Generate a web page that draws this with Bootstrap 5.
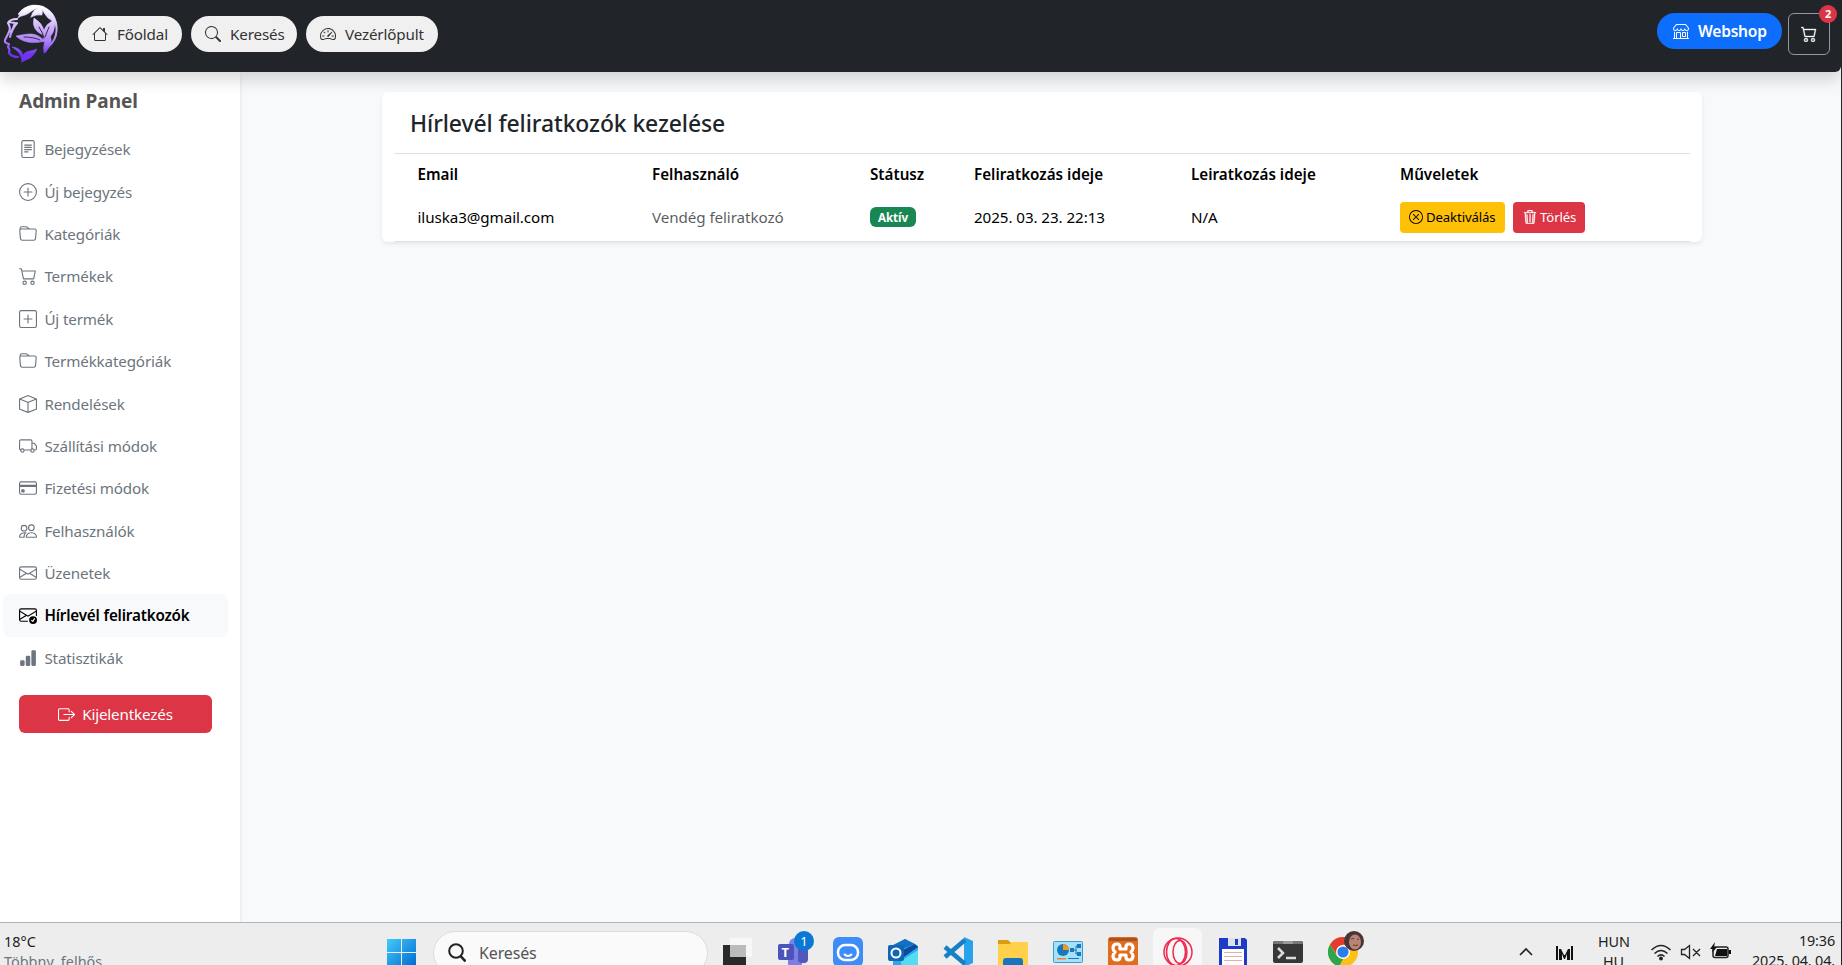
<!DOCTYPE html>
<html lang="hu">
<head>
<meta charset="utf-8">
<meta name="viewport" content="width=device-width, initial-scale=1">
<title>Hírlevél feliratkozók kezelése</title>
<link href="https://cdn.jsdelivr.net/npm/bootstrap@5.3.0/dist/css/bootstrap.min.css" rel="stylesheet">
<style>
body{font-family:"Noto Sans","Open Sans",sans-serif;font-size:15.2px;letter-spacing:-.15px;line-height:24px;height:965px;overflow:hidden;background:#f8f9fa;border-right:1px solid #212529}
svg{flex:none;display:block}
.i{fill:currentColor}
.topbar{height:72px;background:#212529;border-bottom-right-radius:6px;box-shadow:0 8px 16px rgba(0,0,0,.15);z-index:3;padding:0 11px 0 3px}
.main-nav{gap:9px;margin-left:3px}
.pill{height:36px;border-radius:18px;background:#f0f0f0;color:#333;padding:0 0 0 14px;gap:9px;white-space:nowrap}
.pill-a{width:104px}.pill-b{width:106px}.pill-c{width:132px}
.shop-area{gap:6px;margin-top:13px}
.shop-pill{width:125px;height:36px;border-radius:18px;font-weight:600;font-size:15.6px;padding-left:16px;gap:9px;white-space:nowrap;letter-spacing:-.25px}
.cart-btn{width:42px;height:42px;border:1px solid #959799;border-radius:6px;color:#f8f9fa}
.cart-btn svg{stroke:currentColor;stroke-width:.35}
.cart-num{position:absolute;right:-8px;top:-9px;width:18px;height:18px;font-size:11px;line-height:18px;font-weight:700}
.side{width:240px;background:#fff;box-shadow:0 2px 4px rgba(0,0,0,.1);padding:0 12px 0 3px}
.side-title{font-size:19px;font-weight:700;color:#555;line-height:24px;margin:17px 0 15px 16px;letter-spacing:-.02px}
.side-link{height:42.4px;padding:0 16px;gap:7.4px;border-radius:8px;color:#6c757d;white-space:nowrap}
.side-link.on{background:#f8f9fa;color:#000;font-weight:600;letter-spacing:-.18px}
.logout{height:38px;margin:16px 16px 0;border-radius:6px;gap:7px}
.panel{width:1320px;height:150px;margin:20px 0 0 142px;border-radius:6px;background:#fff;box-shadow:0 2px 4px rgba(0,0,0,.075);padding:0 12px}
.panel h1{font-size:22.9px;line-height:29px;padding:17px 16px 15px;margin:0;font-weight:500;letter-spacing:-.08px;color:#212529}
.subs{border-top:1px solid #dee2e6;table-layout:fixed;color:#000;letter-spacing:-.08px}
.subs th,.subs td{border:0;padding:7px 0 8px;white-space:nowrap}
.subs th{font-weight:600;height:41px;letter-spacing:.02px}
.subs th:first-child,.subs td:first-child{padding-left:23.5px}
.subs tr:last-child td{border-bottom:1px solid #dee2e6}
.act{height:31px;border-radius:4px;font-size:13.2px;gap:3px;letter-spacing:-.12px}
.act-w{width:105px;padding-left:9px}.act-d{width:72px;padding-left:10px}
.act-d svg{stroke:currentColor;stroke-width:.4}
.state{width:46px;height:20px;font-size:11.6px;line-height:21px;padding:0;border-radius:6px}
.taskbar{height:43px;background:#ededed;border-top:1px solid #b3b3b3;z-index:4;color:#222;font-size:14.4px;line-height:20px}
.weather{width:387px;padding:9px 0 0 4px;letter-spacing:.02px}
.find{width:275px;height:44px;margin:8px 2px 0 17px;border-radius:22px;background:#fafafa;border:1px solid #dcdcdc;padding-left:14px;gap:13px;color:#555;font-size:16px}
.app{width:55px;height:49px;margin-top:5px;padding-top:9px}
.app.on .tile{background:#f7f7f7;border-radius:6px;width:49px;height:49px;margin-top:-9px;padding-top:9px}
.dot{position:absolute;left:29px;top:3px;width:20px;height:20px;border-radius:50%;background:#0a78d4;color:#fff;font-size:13px}
.lang{width:31px;padding-top:9px}
.clock{width:83px;margin-right:6px;padding-top:8px}
</style>
</head>
<body>
<svg width="0" height="0" class="position-absolute" viewBox="0 0 16 16">
<defs>
<linearGradient id="lg" x1="0" y1="0" x2="0" y2="60" gradientUnits="userSpaceOnUse"><stop offset=".12" stop-color="#fff"/><stop offset=".5" stop-color="#c8a8fa"/><stop offset=".72" stop-color="#a678f6"/><stop offset=".9" stop-color="#6f33f5"/></linearGradient>
<linearGradient id="win" x1="0" y1="0" x2="1" y2="1"><stop offset="0" stop-color="#45cdfb"/><stop offset="1" stop-color="#0068cf"/></linearGradient>
</defs>
<symbol id="house" viewBox="0 0 16 16"><path d="M8.707 1.500a1 1 0 0 0-1.414 0L.646 8.146a.5.5 0 0 0 .708.708L2 8.207V13.500A1.500 1.500 0 0 0 3.500 15h9a1.500 1.500 0 0 0 1.500-1.500V8.207l.646.647a.5.5 0 0 0 .708-.708L13 5.793V2.500a.5.5 0 0 0-.5-.5h-1a.5.5 0 0 0-.5.5v1.293L8.707 1.500ZM13 7.207V13.500a.5.5 0 0 1-.5.5h-9a.5.5 0 0 1-.5-.5V7.207l5-5 5 5Z"/></symbol>
<symbol id="search" viewBox="0 0 16 16"><path d="M11.742 10.344a6.500 6.500 0 1 0-1.397 1.398h-.001c.03.04.062.078.098.115l3.850 3.850a1 1 0 0 0 1.415-1.414l-3.850-3.850a1.007 1.007 0 0 0-.115-.1zM12 6.500a5.500 5.500 0 1 1-11 0 5.500 5.500 0 0 1 11 0z"/></symbol>
<symbol id="speed" viewBox="0 0 16 16"><path d="M8 4a.5.5 0 0 1 .5.5V6a.5.5 0 0 1-1 0V4.500A.5.5 0 0 1 8 4zM3.732 5.732a.5.5 0 0 1 .707 0l.915.914a.5.5 0 1 1-.708.708l-.914-.915a.5.5 0 0 1 0-.707zM2 10a.5.5 0 0 1 .5-.5h1.586a.5.5 0 0 1 0 1H2.500A.5.5 0 0 1 2 10zm9.500 0a.5.5 0 0 1 .5-.5h1.500a.5.5 0 0 1 0 1H12a.5.5 0 0 1-.5-.5zm.754-4.246a.389.389 0 0 0-.527-.02L7.547 9.310a.910.910 0 1 0 1.302 1.258l3.434-4.297a.389.389 0 0 0-.029-.518z"/><path fill-rule="evenodd" d="M0 10a8 8 0 1 1 15.547 2.661c-.442 1.253-1.845 1.602-2.932 1.250C11.309 13.488 9.475 13 8 13c-1.474 0-3.310.488-4.615.911-1.087.352-2.490.003-2.932-1.250A7.988 7.988 0 0 1 0 10zm8-7a7 7 0 0 0-6.603 9.329c.203.575.923.876 1.680.630C4.397 12.533 6.358 12 8 12s3.604.532 4.923.960c.757.245 1.477-.056 1.680-.631A7 7 0 0 0 8 3z"/></symbol>
<symbol id="shop" viewBox="0 0 16 16"><path d="M2.970 1.350A1 1 0 0 1 3.730 1h8.540a1 1 0 0 1 .760.350l2.609 3.044A1.500 1.500 0 0 1 16 5.370v.255a2.375 2.375 0 0 1-4.250 1.458A2.371 2.371 0 0 1 9.875 8 2.370 2.370 0 0 1 8 7.083 2.370 2.370 0 0 1 6.125 8a2.370 2.370 0 0 1-1.875-.917A2.375 2.375 0 0 1 0 5.625V5.370a1.500 1.500 0 0 1 .361-.976l2.610-3.045zm1.780 4.275a1.375 1.375 0 0 0 2.750 0 .5.5 0 0 1 1 0 1.375 1.375 0 0 0 2.750 0 .5.5 0 0 1 1 0 1.375 1.375 0 1 0 2.750 0V5.370a.5.5 0 0 0-.120-.325L12.270 2H3.730L1.120 5.045A.5.5 0 0 0 1 5.370v.255a1.375 1.375 0 0 0 2.750 0 .5.5 0 0 1 1 0zM1.500 8.500A.5.5 0 0 1 2 9v6h1v-5a1 1 0 0 1 1-1h3a1 1 0 0 1 1 1v5h6V9a.5.5 0 0 1 1 0v6h.5a.5.5 0 0 1 0 1H.5a.5.5 0 0 1 0-1H1V9a.5.5 0 0 1 .5-.5zM4 15h3v-5H4v5zm5-5a1 1 0 0 1 1-1h2a1 1 0 0 1 1 1v3a1 1 0 0 1-1 1h-2a1 1 0 0 1-1-1v-3zm3 0h-2v3h2v-3z"/></symbol>
<symbol id="cart" viewBox="0 0 16 16"><path d="M0 1.500A.5.5 0 0 1 .5 1H2a.5.5 0 0 1 .485.379L2.890 3H14.500a.5.5 0 0 1 .490.598l-1.500 7A.5.5 0 0 1 13 11H4a.5.5 0 0 1-.491-.408L2.010 3.607 1.610 2H.5a.5.5 0 0 1-.5-.5zM3.102 4l1.313 6h8.170l1.313-6H3.102zM5 12a2 2 0 1 0 0 4 2 2 0 0 0 0-4zm7 0a2 2 0 1 0 0 4 2 2 0 0 0 0-4zm-7 1a1 1 0 1 1 0 2 1 1 0 0 1 0-2zm7 0a1 1 0 1 1 0 2 1 1 0 0 1 0-2z"/></symbol>
<symbol id="file" viewBox="0 0 16 16"><path d="M5 4a.5.5 0 0 0 0 1h6a.5.5 0 0 0 0-1H5zm-.5 2.500A.5.5 0 0 1 5 6h6a.5.5 0 0 1 0 1H5a.5.5 0 0 1-.5-.5zM5 8a.5.5 0 0 0 0 1h6a.5.5 0 0 0 0-1H5zm0 2a.5.5 0 0 0 0 1h3a.5.5 0 0 0 0-1H5z"/><path d="M2 2a2 2 0 0 1 2-2h8a2 2 0 0 1 2 2v12a2 2 0 0 1-2 2H4a2 2 0 0 1-2-2V2zm10-1H4a1 1 0 0 0-1 1v12a1 1 0 0 0 1 1h8a1 1 0 0 0 1-1V2a1 1 0 0 0-1-1z"/></symbol>
<symbol id="plusc" viewBox="0 0 16 16"><path d="M8 15A7 7 0 1 1 8 1a7 7 0 0 1 0 14zm0 1A8 8 0 1 0 8 0a8 8 0 0 0 0 16z"/><path d="M8 4a.5.5 0 0 1 .5.5v3h3a.5.5 0 0 1 0 1h-3v3a.5.5 0 0 1-1 0v-3h-3a.5.5 0 0 1 0-1h3v-3A.5.5 0 0 1 8 4z"/></symbol>
<symbol id="pluss" viewBox="0 0 16 16"><path d="M14 1a1 1 0 0 1 1 1v12a1 1 0 0 1-1 1H2a1 1 0 0 1-1-1V2a1 1 0 0 1 1-1h12zM2 0a2 2 0 0 0-2 2v12a2 2 0 0 0 2 2h12a2 2 0 0 0 2-2V2a2 2 0 0 0-2-2H2z"/><path d="M8 4a.5.5 0 0 1 .5.5v3h3a.5.5 0 0 1 0 1h-3v3a.5.5 0 0 1-1 0v-3h-3a.5.5 0 0 1 0-1h3v-3A.5.5 0 0 1 8 4z"/></symbol>
<symbol id="folder" viewBox="0 0 16 16"><path d="M.540 3.870.5 3a2 2 0 0 1 2-2h3.672a2 2 0 0 1 1.414.586l.828.828A2 2 0 0 0 9.828 3h3.982a2 2 0 0 1 1.992 2.181l-.637 7A2 2 0 0 1 13.174 14H2.826a2 2 0 0 1-1.991-1.819l-.637-7a1.990 1.990 0 0 1 .342-1.310zM2.190 4a1 1 0 0 0-.996 1.090l.637 7a1 1 0 0 0 .995.910h10.348a1 1 0 0 0 .995-.910l.637-7A1 1 0 0 0 13.810 4H2.190zm4.690-1.707A1 1 0 0 0 6.172 2H2.500a1 1 0 0 0-1 .981l.006.139C1.720 3.042 1.950 3 2.190 3h5.396l-.707-.707z"/></symbol>
<symbol id="box" viewBox="0 0 16 16"><path d="M8.186 1.113a.5.5 0 0 0-.372 0L1.846 3.500 8 5.961 14.154 3.500 8.186 1.113zM15 4.239l-6.500 2.600v7.922l6.500-2.600V4.240zM7.500 14.762V6.838L1 4.239v7.923l6.500 2.600zM7.443.184a1.500 1.500 0 0 1 1.114 0l7.129 2.852A.5.5 0 0 1 16 3.500v8.662a1 1 0 0 1-.629.928l-7.185 2.874a.5.5 0 0 1-.372 0L.630 13.090a1 1 0 0 1-.630-.928V3.500a.5.5 0 0 1 .314-.464L7.443.184z"/></symbol>
<symbol id="truck" viewBox="0 0 16 16"><path d="M0 3.500A1.500 1.500 0 0 1 1.500 2h9A1.500 1.500 0 0 1 12 3.500V5h1.020a1.500 1.500 0 0 1 1.170.563l1.481 1.850a1.500 1.500 0 0 1 .329.938V10.500a1.500 1.500 0 0 1-1.500 1.500H14a2 2 0 1 1-4 0H5a2 2 0 1 1-3.998-.085A1.500 1.500 0 0 1 0 10.500v-7zm1.294 7.456A1.999 1.999 0 0 1 4.732 11h5.536a2.010 2.010 0 0 1 .732-.732V3.500a.5.5 0 0 0-.5-.5h-9a.5.5 0 0 0-.5.5v7a.5.5 0 0 0 .294.456zM12 10a2 2 0 0 1 1.732 1h.768a.5.5 0 0 0 .5-.5V8.350a.5.5 0 0 0-.110-.312l-1.480-1.850A.5.5 0 0 0 13.020 6H12v4zm-9 1a1 1 0 1 0 0 2 1 1 0 0 0 0-2zm9 0a1 1 0 1 0 0 2 1 1 0 0 0 0-2z"/></symbol>
<symbol id="card" viewBox="0 0 16 16"><path d="M0 4a2 2 0 0 1 2-2h12a2 2 0 0 1 2 2v8a2 2 0 0 1-2 2H2a2 2 0 0 1-2-2V4zm2-1a1 1 0 0 0-1 1v1h14V4a1 1 0 0 0-1-1H2zm13 4H1v5a1 1 0 0 0 1 1h12a1 1 0 0 0 1-1V7z"/><path d="M2 10a1 1 0 0 1 1-1h1a1 1 0 0 1 1 1v1a1 1 0 0 1-1 1H3a1 1 0 0 1-1-1v-1z"/></symbol>
<symbol id="people" viewBox="0 0 16 16"><path d="M15 14s1 0 1-1-1-4-5-4-5 3-5 4 1 1 1 1h8Zm-7.978-1A.261.261 0 0 1 7 12.996c.001-.264.167-1.030.760-1.720C8.312 10.629 9.282 10 11 10c1.717 0 2.687.630 3.240 1.276.593.690.758 1.457.760 1.720l-.008.002a.274.274 0 0 1-.014.002H7.022ZM11 7a2 2 0 1 0 0-4 2 2 0 0 0 0 4Zm3-2a3 3 0 1 1-6 0 3 3 0 0 1 6 0ZM6.936 9.280a5.880 5.880 0 0 0-1.230-.247A7.350 7.350 0 0 0 5 9c-4 0-5 3-5 4 0 .667.333 1 1 1h4.216A2.238 2.238 0 0 1 5 13c0-1.010.377-2.042 1.090-2.904.243-.294.526-.569.846-.816ZM4.920 10A5.493 5.493 0 0 0 4 13H1c0-.260.164-1.030.760-1.724.545-.636 1.492-1.256 3.160-1.275ZM1.500 5.500a3 3 0 1 1 6 0 3 3 0 0 1-6 0Zm3-2a2 2 0 1 0 0 4 2 2 0 0 0 0-4Z"/></symbol>
<symbol id="mail" viewBox="0 0 16 16"><path d="M0 4a2 2 0 0 1 2-2h12a2 2 0 0 1 2 2v8a2 2 0 0 1-2 2H2a2 2 0 0 1-2-2V4Zm2-1a1 1 0 0 0-1 1v.217l7 4.200 7-4.200V4a1 1 0 0 0-1-1H2Zm13 2.383-4.708 2.825L15 11.105V5.383Zm-.034 6.876-5.640-3.471L8 9.583l-1.326-.795-5.640 3.470A1 1 0 0 0 2 13h12a1 1 0 0 0 .966-.741ZM1 11.105l4.708-2.897L1 5.383v5.722Z"/></symbol>
<symbol id="mailok" viewBox="0 0 16 16"><path d="M2 2a2 2 0 0 0-2 2v8.010A2 2 0 0 0 2 14h5.500a.5.5 0 0 0 0-1H2a1 1 0 0 1-.966-.741l5.640-3.471L8 9.583l7-4.200V8.500a.5.5 0 0 0 1 0V4a2 2 0 0 0-2-2H2Zm3.708 6.208L1 11.105V5.383l4.708 2.825ZM1 4.217V4a1 1 0 0 1 1-1h12a1 1 0 0 1 1 1v.217l-7 4.200-7-4.200Z"/><path d="M16 12.500a3.500 3.500 0 1 1-7 0 3.500 3.500 0 0 1 7 0Zm-1.993-1.679a.5.5 0 0 0-.686.172l-1.170 1.950-.547-.547a.5.5 0 0 0-.708.708l.774.773a.750.750 0 0 0 1.174-.144l1.335-2.226a.5.5 0 0 0-.172-.686Z"/></symbol>
<symbol id="bars" viewBox="0 0 16 16"><path d="M1 11a1 1 0 0 1 1-1h2a1 1 0 0 1 1 1v3a1 1 0 0 1-1 1H2a1 1 0 0 1-1-1v-3zm5-4a1 1 0 0 1 1-1h2a1 1 0 0 1 1 1v7a1 1 0 0 1-1 1H7a1 1 0 0 1-1-1V7zm5-5a1 1 0 0 1 1-1h2a1 1 0 0 1 1 1v12a1 1 0 0 1-1 1h-2a1 1 0 0 1-1-1V2z"/></symbol>
<symbol id="out" viewBox="0 0 16 16"><path d="M10 12.500a.5.5 0 0 1-.5.5h-8a.5.5 0 0 1-.5-.5v-9a.5.5 0 0 1 .5-.5h8a.5.5 0 0 1 .5.5v2a.5.5 0 0 0 1 0v-2A1.500 1.500 0 0 0 9.500 2h-8A1.500 1.500 0 0 0 0 3.500v9A1.500 1.500 0 0 0 1.500 14h8a1.500 1.500 0 0 0 1.500-1.500v-2a.5.5 0 0 0-1 0v2z"/><path d="M15.854 8.354a.5.5 0 0 0 0-.708l-3-3a.5.5 0 0 0-.708.708L14.293 7.500H5.500a.5.5 0 0 0 0 1h8.793l-2.147 2.146a.5.5 0 0 0 .708.708l3-3z"/></symbol>
<symbol id="xc" viewBox="0 0 16 16"><path d="M8 15A7 7 0 1 1 8 1a7 7 0 0 1 0 14zm0 1A8 8 0 1 0 8 0a8 8 0 0 0 0 16z"/><path d="M4.646 4.646a.5.5 0 0 1 .708 0L8 7.293l2.646-2.647a.5.5 0 0 1 .708.708L8.707 8l2.647 2.646a.5.5 0 0 1-.708.708L8 8.707l-2.646 2.647a.5.5 0 0 1-.708-.708L7.293 8 4.646 5.354a.5.5 0 0 1 0-.708z"/></symbol>
<symbol id="trash" viewBox="0 0 16 16"><path d="M6.500 1h3a.5.5 0 0 1 .5.5v1H6v-1a.5.5 0 0 1 .5-.5ZM11 2.500v-1A1.500 1.500 0 0 0 9.500 0h-3A1.500 1.500 0 0 0 5 1.500v1H2.506a.580.580 0 0 0-.010 0H1.500a.5.5 0 0 0 0 1h.538l.853 10.660A2 2 0 0 0 4.885 16h6.230a2 2 0 0 0 1.994-1.840l.853-10.660h.538a.5.5 0 0 0 0-1h-.995a.590.590 0 0 0-.010 0H11Zm1.958 1-.846 10.580a1 1 0 0 1-.997.920h-6.230a1 1 0 0 1-.997-.920L3.042 3.500h9.916ZM4.500 5a.5.5 0 0 1 .530.470l.5 8.500a.5.5 0 0 1-.998.060L4.030 5.530A.5.5 0 0 1 4.500 5Zm7 0a.5.5 0 0 1 .470.530l-.5 8.500a.5.5 0 0 1-.998-.060l.5-8.500A.5.5 0 0 1 11.500 5ZM8 4.500a.5.5 0 0 1 .5.5v8.500a.5.5 0 0 1-1 0V5a.5.5 0 0 1 .5-.5Z"/></symbol>
</svg>

<div class="d-flex flex-column h-100">
<header class="topbar d-flex align-items-start position-relative flex-shrink-0">
  <svg width="56" height="64" viewBox="3 0 56 64" class="me-3" fill="none" stroke="url(#lg)" stroke-linecap="round" stroke-linejoin="round">
    <path d="M19 14C25 5 40 3 49 11c9 8 10 23 3 32q-5 5-7 9" stroke-width="2"/>
    <g fill="url(#lg)" stroke-width=".6"><path d="M18 18C23 5 33 3 42 7 33 8 31 13 25 15Q20 16 18 18Z"/><path d="M31 17Q33 8 43 6L42 15Q37 14 31 17Z"/><path d="M42 7Q56 12 56 27 54 21 48 18 43 13 42 7Z"/><path d="M43 35Q31 30 34 18 42 23 44 30 46 24 54 20 57 34 44 42Z"/><path d="M45 41C35 31 28 34 16 36 23 43 34 44 45 41Z"/><path d="M22 62C22 55 17 50 12 47 21 48 22 53 23 55 27 50 30 52 37 49 32 60 26 59 22 62Z"/><path d="M44 53Q42 43 49 34 54 42 48 47Z"/></g>
    <path d="M17 19q-7 0-9 4 3 5 1 9l-4 8q-1 3 4 4l-1 3q2 2 1 6 3 4 9 4M9 22l6 1q-2 6-4 9M10 37q2-8 7-14" stroke-width="2.100"/>
    <path d="M39 27q4 6 5 11M49 27q-2 5-4 10M24 37q10 0 16 3" stroke="#212529" stroke-width=".9"/>
  </svg>
  <nav class="main-nav d-flex pt-3">
    <a class="pill pill-a d-flex align-items-center text-decoration-none" href="#"><svg class="i" width="16" height="16"><use href="#house"/></svg>Főoldal</a>
    <a class="pill pill-b d-flex align-items-center text-decoration-none" href="#"><svg class="i" width="16" height="16"><use href="#search"/></svg>Keresés</a>
    <a class="pill pill-c d-flex align-items-center text-decoration-none" href="#"><svg class="i" width="16" height="16"><use href="#speed"/></svg>Vezérlőpult</a>
  </nav>
  <div class="shop-area d-flex ms-auto align-items-start">
    <a class="shop-pill d-flex align-items-center text-bg-primary text-decoration-none" href="#"><svg class="i" width="16" height="16"><use href="#shop"/></svg>Webshop</a>
    <a class="cart-btn d-flex align-items-center justify-content-center position-relative" href="#"><svg class="i" width="16" height="16"><use href="#cart"/></svg><span class="cart-num rounded-circle text-bg-danger text-center">2</span></a>
  </div>
</header>

<div class="d-flex flex-grow-1 overflow-hidden">
  <aside class="side flex-shrink-0">
    <div class="side-title">Admin Panel</div>
    <nav>
      <div class="side-link d-flex align-items-center"><svg class="i" width="18" height="18"><use href="#file"/></svg>Bejegyzések</div>
      <div class="side-link d-flex align-items-center"><svg class="i" width="18" height="18"><use href="#plusc"/></svg>Új bejegyzés</div>
      <div class="side-link d-flex align-items-center"><svg class="i" width="18" height="18"><use href="#folder"/></svg>Kategóriák</div>
      <div class="side-link d-flex align-items-center"><svg class="i" width="18" height="18"><use href="#cart"/></svg>Termékek</div>
      <div class="side-link d-flex align-items-center"><svg class="i" width="18" height="18"><use href="#pluss"/></svg>Új termék</div>
      <div class="side-link d-flex align-items-center"><svg class="i" width="18" height="18"><use href="#folder"/></svg>Termékkategóriák</div>
      <div class="side-link d-flex align-items-center"><svg class="i" width="18" height="18"><use href="#box"/></svg>Rendelések</div>
      <div class="side-link d-flex align-items-center"><svg class="i" width="18" height="18"><use href="#truck"/></svg>Szállítási módok</div>
      <div class="side-link d-flex align-items-center"><svg class="i" width="18" height="18"><use href="#card"/></svg>Fizetési módok</div>
      <div class="side-link d-flex align-items-center"><svg class="i" width="18" height="18"><use href="#people"/></svg>Felhasználók</div>
      <div class="side-link d-flex align-items-center"><svg class="i" width="18" height="18"><use href="#mail"/></svg>Üzenetek</div>
      <div class="side-link on d-flex align-items-center"><svg class="i" width="18" height="18"><use href="#mailok"/></svg>Hírlevél feliratkozók</div>
      <div class="side-link d-flex align-items-center"><svg class="i" width="18" height="18"><use href="#bars"/></svg>Statisztikák</div>
    </nav>
    <div class="logout d-flex align-items-center justify-content-center text-bg-danger"><svg class="i" width="17" height="17"><use href="#out"/></svg>Kijelentkezés</div>
  </aside>
  <main class="flex-grow-1">
    <section class="panel">
      <h1>Hírlevél feliratkozók kezelése</h1>
      <table class="subs w-100">
        <colgroup><col width="258"><col width="218"><col width="104"><col width="217"><col width="209"><col></colgroup>
        <tr><th>Email</th><th>Felhasználó</th><th>Státusz</th><th>Feliratkozás ideje</th><th>Leiratkozás ideje</th><th>Műveletek</th></tr>
        <tr><td>iluska3@gmail.com</td><td class="text-muted">Vendég feliratkozó</td><td><span class="badge state text-bg-success d-block">Aktív</span></td><td>2025. 03. 23. 22:13</td><td>N/A</td>
        <td><div class="d-flex gap-2"><span class="act act-w d-flex align-items-center text-bg-warning"><svg class="i" width="14" height="14"><use href="#xc"/></svg>Deaktiválás</span><span class="act act-d d-flex align-items-center text-bg-danger"><svg class="i" width="14" height="14"><use href="#trash"/></svg>Törlés</span></div></td></tr>
      </table>
    </section>
  </main>
</div>

<footer class="taskbar d-flex align-items-start flex-shrink-0 position-relative overflow-hidden">
  <div class="weather text-nowrap flex-shrink-0">18°C<br><span class="text-secondary">Többny. felhős</span></div>
  <svg width="29" height="29" class="mt-3" viewBox="0 1 29 29" fill="url(#win)"><path d="M1 0h13v14H0V1zM15 0h13l1 1v13H15zM0 15h14v14H0zM15 15h14v14H15z"/></svg>
  <div class="find d-flex align-items-center flex-shrink-0"><svg width="18" height="20" viewBox="0 0 18 20" fill="none" stroke="#222" stroke-width="2"><circle cx="8" cy="8" r="6.800"/><path d="m12.500 13 5 5.500" stroke-width="2.600"/></svg>Keresés</div>
  <div class="app d-flex justify-content-center"><svg width="30" height="30"><path fill="#292929" d="M0 8h23v22H0z"/><path fill="#f7f7f7" d="M7 1h22v19H7z"/><path fill="#bbb" d="M7 8h16v12H7z"/></svg></div>
  <div class="app d-flex justify-content-center position-relative"><svg width="30" height="30"><circle cx="17" cy="7" r="6" fill="#7b83eb"/><rect x="10" y="10" width="14" height="20" rx="4" fill="#7b7ee3"/><rect x="20" y="10" width="10" height="16" rx="4" fill="#5158bb"/><rect y="7" width="16" height="16" rx="2" fill="#4b53bc"/><text x="3.500" y="20" font-size="13" font-weight="700" fill="#fff">T</text></svg><span class="dot text-center">1</span></div>
  <div class="app d-flex justify-content-center"><svg width="30" height="30" fill="none"><rect width="30" height="30" rx="6" fill="#3d8df8"/><rect x="5" y="8" width="20" height="15" rx="7" stroke="#fff" stroke-width="2.500"/><path d="M11 17q4 4 8 0" stroke="#fff" stroke-width="2"/></svg></div>
  <div class="app d-flex justify-content-center"><svg width="30" height="30"><path fill="#2ba7ee" d="M17 2 5 9v21h25V9z"/><path fill="#1271c4" d="M17 2 5 8l4 6 18-7z"/><path fill="#0d4a9b" d="m27 7 3 3-17 12V14z"/><path fill="#55dcf3" d="m30 13-17 11v6h17z"/><rect y="8" width="16" height="16" rx="2" fill="#1066b5"/><circle cx="8" cy="16" r="4.500" fill="none" stroke="#fff" stroke-width="2"/></svg></div>
  <div class="app d-flex justify-content-center"><svg width="30" height="30"><path fill="#28a3eb" d="m21 0 9 4v22l-9 4z"/><path fill="none" stroke="#1580c7" stroke-width="4.500" d="M2 20 22 3M2 10l20 17"/></svg></div>
  <div class="app d-flex justify-content-center"><svg width="30" height="30"><path fill="#d99c12" d="M0 3h10l3 3v3H0z"/><path fill="#ffd04a" d="M0 7h12l2-2h16v25H0z"/><rect x="5" y="21" width="20" height="12" rx="3" fill="#1774bd"/></svg></div>
  <div class="app d-flex justify-content-center"><svg width="30" height="30"><rect x=".5" y="4.500" width="29" height="21" rx="1" fill="#a5e2f8" stroke="#3a9ccc"/><circle cx="10" cy="13" r="6" fill="#1779b9"/><path fill="#f7941d" d="M10 13V7a6 6 0 0 1 6 6z"/><path d="M19 13h4V9h2m-2 4v4h2" fill="none" stroke="#1779b9"/><path fill="#1779b9" d="M24 7h4v4h-4zM24 15h4v4h-4zM17 11h4v4h-4zM15 21h11v1H15z"/><path fill="#f58220" d="M4 21h9v1.500H4z"/></svg></div>
  <div class="app d-flex justify-content-center"><svg width="30" height="30"><rect width="30" height="30" rx="3" fill="#df6e1c"/><rect x="1" y="1" width="28" height="3" rx="1" fill="#a95220"/><path d="M9 7q-4 0-4 4 0 2 2 4-2 2-2 4 0 4 4 4 3 0 3-3v-2h6v2q0 3 3 3 4 0 4-4 0-2-2-4 2-2 2-4 0-4-4-4-3 0-3 3v2h-6v-2q0-3-3-3z" fill="none" stroke="#fff" stroke-width="3.200" stroke-linejoin="round"/></svg></div>
  <div class="app on d-flex justify-content-center"><div class="tile d-flex justify-content-center"><svg width="30" height="30" fill="none" stroke="#ee2950" stroke-width="1.500"><circle cx="15" cy="15" r="14"/><ellipse cx="13" cy="15" rx="9.500" ry="13.500"/><ellipse cx="17" cy="15" rx="7" ry="11.500"/></svg></div></div>
  <div class="app d-flex justify-content-center"><svg width="30" height="30"><path fill="#1c3bc8" d="M1 1h26l2 2v27H1z"/><path fill="#dde2e8" d="M10 1h13v8H10z"/><path fill="#1c3bc8" d="M17 2h3v6h-3z"/><path fill="#fff" d="M4 12h22v18H4z"/><path stroke="#e5aaae" d="M6 15.500h18M6 19.500h18M6 23.500h18"/></svg></div>
  <div class="app d-flex justify-content-center"><svg width="30" height="30"><rect y="4" width="30" height="22" rx="2" fill="#373737"/><path fill="#777" d="M1 4h9v3H0zM20 4h9l1 3H20z"/><path fill="#999" d="M10 4h10v3H10z"/><path d="m5 11 5 5-5 5M13 21h10" fill="none" stroke="#ddd" stroke-width="2.500"/></svg></div>
  <div class="app d-flex justify-content-center"><svg width="30" height="36" viewBox="0 0 30 36" class="overflow-visible"><circle cx="15" cy="15" r="15" fill="#fbc116"/><path fill="#e33b2e" d="M2 7.500a15 15 0 0 1 26 0H15L9 18z"/><path fill="#2da44e" d="M2 7.500 9 19l6 3-4 7.500A15 15 0 0 1 2 7.500z"/><circle cx="15" cy="15" r="7" fill="#fff"/><circle cx="15" cy="15" r="5.600" fill="#2b7de9"/><circle cx="26" cy="4" r="10" fill="#493535"/><ellipse cx="27" cy="5" rx="6" ry="7.500" fill="#b98378"/><path d="M23 2q2-1 3 0m3 0 2 .3M25 8q3 1 5 0" stroke="#60362f" fill="none"/></svg></div>
  <div class="d-flex align-items-start ms-auto text-nowrap flex-shrink-0">
    <svg width="79" height="42" viewBox="1519 923 79 42"><path d="m1520 955 6-6 6 6" fill="none" stroke="#222" stroke-width="1.700"/><path fill="#111" d="M1556 946h2v14h-2zm3 3h2l3 6 1 0 3-6h2v11h-3v-6l-2 5h-1l-2-5v6h-3zm12-3h2v14h-2z"/></svg>
    <div class="lang text-center">HUN<br>HU</div>
    <svg width="123" height="42" viewBox="1629 923 123 42" fill="none" stroke="#222" stroke-width="1.500"><path d="M1651.500 950q9.500-9 19 0M1654.500 953.500q6.500-6 13 0M1657.500 956.500q3.500-3.200 7 0"/><circle cx="1661" cy="958.500" r="1.200" fill="#222"/><path d="M1681.500 949.500h3l5-4v13l-5-4h-3zM1693 949l7 7m0-7-7 7" stroke-width="1.300"/><rect x="1713" y="947" width="15" height="10.500" rx="2"/><path fill="#111" stroke="none" d="M1717 949h10v7h-12zM1728.500 950h2.500v4h-2.500zM1715 942l-5 7h3l-1 4 5-6h-3z"/></svg>
    <div class="clock text-end">19:36<br>2025. 04. 04.</div>
  </div>
</footer>
</div>
<script src="https://cdn.jsdelivr.net/npm/bootstrap@5.3.0/dist/js/bootstrap.bundle.min.js"></script>
</body>
</html>
